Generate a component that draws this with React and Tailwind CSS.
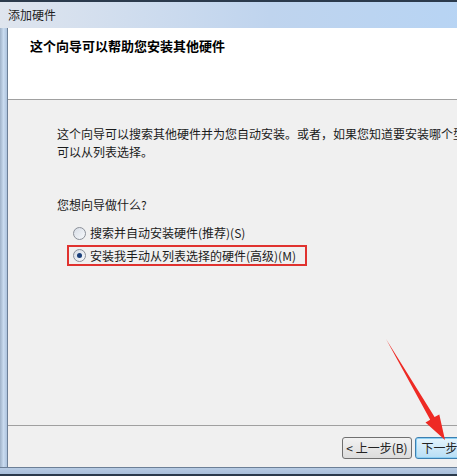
const font = { fontFamily: '"Noto Sans CJK SC", "Liberation Sans", sans-serif' };

const Radio = ({ checked }) => (
  <span className="relative inline-flex w-[13px] h-[13px] shrink-0 rounded-full border border-[#8a8f98] bg-gradient-to-br from-[#d7dde6] to-[#f7f9fb] items-center justify-center">
    {checked && <span className="w-[5px] h-[5px] rounded-full bg-[#1a3f7a]" />}
  </span>
);

const App = () => {
  return (
    <div className="relative w-[457px] h-[476px] overflow-hidden bg-[#c3d5ea]" style={font}>
      <div className="w-[540px] h-full flex flex-col">
        {/* title bar */}
        <div className="h-[28px] shrink-0 border-t-2 border-[#2b3a4c] bg-gradient-to-r from-[#dfe5ee] via-[#bfd4ee] to-[#b4d4f6] flex items-center pl-[8px]">
          <span className="text-[12px] text-[#1e1e1e] leading-none">添加硬件</span>
        </div>
        <div className="flex flex-1 min-h-0">
          <div className="w-[8px] shrink-0 bg-gradient-to-r from-[#9fb2c8] via-[#c9dbef] to-[#aec4de] border-r border-[#6c7f96]" />
          <div className="flex-1 flex flex-col">
            {/* header */}
            <div className="h-[72px] shrink-0 bg-white border-b border-[#a0a0a0] pl-[22px] pt-[10px]">
              <div className="text-[13px] font-bold text-black leading-[16px]">这个向导可以帮助您安装其他硬件</div>
            </div>
            {/* body */}
            <div className="flex-1 bg-[#f0f0f0] pl-[49px] pt-[25px] text-[12px] text-[#1b1b1b] leading-[18px] border-b border-[#a0a0a0]">
              <p className="whitespace-nowrap">这个向导可以搜索其他硬件并为您自动安装。或者，如果您知道要安装哪个型号的硬件，</p>
              <p>可以从列表选择。</p>
              <p className="mt-[35px]">您想向导做什么?</p>
              <div className="mt-[10px] ml-[16px] flex items-center gap-[4px] h-[18px]">
                <Radio />
                <span>搜索并自动安装硬件(推荐)(S)</span>
              </div>
              <div className="mt-[3px] ml-[10px] w-[240px] h-[21px] border-2 border-[#e0322f] flex items-center gap-[4px] pl-[4px]">
                <Radio checked />
                <span>安装我手动从列表选择的硬件(高级)(M)</span>
              </div>
            </div>
            {/* footer */}
            <div className="h-[41px] shrink-0 bg-[#f0f0f0] flex items-start pt-[11px] pl-[334px] gap-[3px]">
              <button className="w-[70px] h-[22px] rounded-[3px] border border-[#707070] bg-gradient-to-b from-[#f2f2f2] to-[#dcdcdc] text-[12px] text-[#222] leading-none">
                &lt; 上一步(B)
              </button>
              <button className="w-[75px] h-[22px] rounded-[3px] border border-[#3c7fb1] bg-gradient-to-b from-[#e5f4fc] to-[#b7def5] text-[12px] text-[#222] leading-none shadow-[inset_0_0_0_1px_#8ed0f3]">
                下一步(N) &gt;
              </button>
            </div>
          </div>
        </div>
        {/* bottom frame */}
        <div className="h-[9px] shrink-0 border-t border-[#6c7f96] bg-gradient-to-b from-[#b7cbe3] to-[#a9bfda] border-b-2 border-b-[#2b3a4c]" />
      </div>

      {/* annotation arrow */}
      <svg className="absolute left-0 top-0 pointer-events-none" width="457" height="476">
        <polygon
          points="386,339 434.6,417.1 439.3,414.4 445,440 425.5,422.4 430.2,419.7"
          fill="#ee2a24"
        />
      </svg>
    </div>
  );
};

export default App;
